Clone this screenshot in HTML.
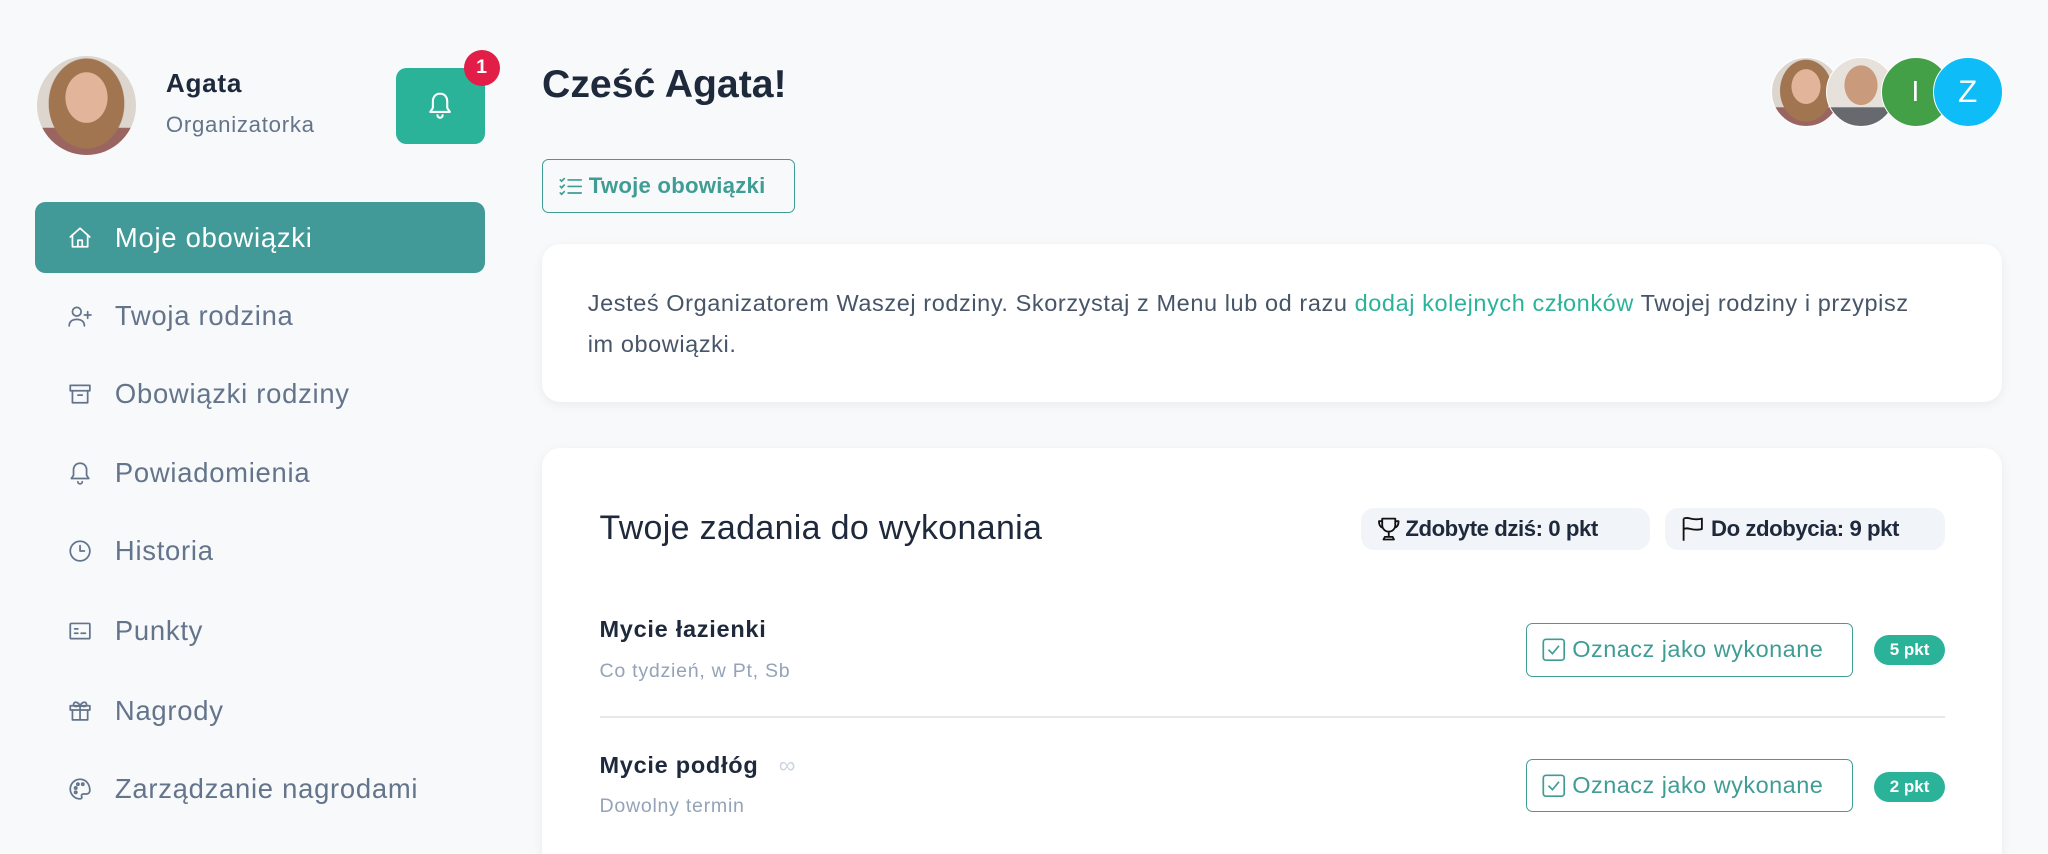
<!DOCTYPE html>
<html><head><meta charset="utf-8"><style>
html,body{margin:0;padding:0;background:#f7f9fb;overflow:hidden}
#w{zoom:1.306122;width:1568px;height:654px;position:relative;font-family:"Liberation Sans",sans-serif;color:#1e293b;letter-spacing:0.035em}
.a{position:absolute;white-space:nowrap}
.av{border-radius:50%;overflow:hidden}
.mi{position:absolute;left:27px;width:344px;height:54px;display:flex;align-items:center;font-size:21px;color:#64748b}
.mi svg{position:absolute;left:24px;width:20px;height:20px;fill:none;stroke:#64748b;stroke-width:1.6;stroke-linecap:round;stroke-linejoin:round}
.mi span{position:absolute;left:61px}
.card{position:absolute;left:415px;width:1118px;background:#fff;border-radius:14px;box-shadow:0 2px 8px rgba(15,23,42,.06)}
.pill{position:absolute;top:389px;height:32px;background:#f1f5f9;border-radius:10px;font-weight:bold;font-size:17px;display:flex;align-items:center;padding:0 12px;box-sizing:border-box;letter-spacing:-0.02em;white-space:nowrap}
.btn{position:absolute;left:1168px;width:251px;height:41px;border:1.5px solid #3f9d95;border-radius:5px;box-sizing:border-box;color:#3f9d95;font-size:18px;display:flex;align-items:center;padding-left:12px;white-space:nowrap;letter-spacing:0.02em}
.bdg{position:absolute;left:1435px;width:54px;height:23px;border-radius:12px;background:#2bb39a;color:#fff;font-weight:bold;font-size:13px;display:flex;align-items:center;justify-content:center;letter-spacing:0}
.tt{position:absolute;left:459px;font-size:18px;font-weight:bold;color:#1e293b}
.ts{position:absolute;left:459px;font-size:15px;color:#94a3b8}
</style></head><body><div id="w">
<div class="a av" style="left:28px;top:43px;width:76px;height:76px;background:radial-gradient(ellipse 30% 36% at 50% 42%,#e2b59b 0 70%,transparent 72%),radial-gradient(ellipse 42% 50% at 50% 48%,#a07550 0 90%,transparent 92%),linear-gradient(#dcd6cf 72%,#9a6460 73%)"></div>
<div class="a" style="left:127px;top:52px;font-size:20px;font-weight:bold">Agata</div>
<div class="a" style="left:127px;top:86px;font-size:17px;color:#64748b">Organizatorka</div>
<div class="a" style="left:303px;top:52px;width:68px;height:58px;background:#2bb39a;border-radius:8px"></div>
<svg class="a" style="left:327px;top:70px" width="20" height="22" viewBox="0 0 20 22" fill="none" stroke="#fff" stroke-width="1.6" stroke-linecap="round" stroke-linejoin="round"><path d="M10 2c-3.3 0-5.5 2.5-5.5 6v5L2.5 16h15l-2-3V8c0-3.5-2.2-6-5.5-6z"/><path d="M8 18.5a2 2 0 0 0 4 0"/></svg>
<div class="a" style="left:355px;top:38px;width:28px;height:28px;border-radius:50%;background:#e11d48;color:#fff;font-weight:bold;font-size:15px;display:flex;align-items:center;justify-content:center">1</div>

<div class="mi" style="top:155px;background:#419a97;border-radius:8px;color:#fff"><svg viewBox="0 0 24 24" style="stroke:#fff"><path d="M3 11l9-8 9 8M5 9v11h14V9M10 20v-6h4v6"/></svg><span>Moje obowiązki</span></div>
<div class="mi" style="top:215px"><svg viewBox="0 0 24 24"><circle cx="9" cy="8" r="4"/><path d="M2 21c0-4 3-6 7-6s7 2 7 6M19 8v6M16 11h6"/></svg><span>Twoja rodzina</span></div>
<div class="mi" style="top:275px"><svg viewBox="0 0 24 24"><rect x="3" y="4" width="18" height="5"/><path d="M5 9v11h14V9M10 13h4"/></svg><span>Obowiązki rodziny</span></div>
<div class="mi" style="top:335px"><svg viewBox="0 0 24 24"><path d="M12 3c-3.5 0-6 2.5-6 6v5l-2 3h16l-2-3V9c0-3.5-2.5-6-6-6zM10 20a2 2 0 0 0 4 0"/></svg><span>Powiadomienia</span></div>
<div class="mi" style="top:395px"><svg viewBox="0 0 24 24"><circle cx="12" cy="12" r="9"/><path d="M12 7v5h4"/></svg><span>Historia</span></div>
<div class="mi" style="top:456px"><svg viewBox="0 0 24 24"><rect x="3" y="5" width="18" height="14" rx="1"/><path d="M7 10h3M7 14h3M13 14h4"/></svg><span>Punkty</span></div>
<div class="mi" style="top:517px"><svg viewBox="0 0 24 24"><rect x="3" y="8" width="18" height="4"/><path d="M5 12v9h14v-9M12 8v13M12 8c-2-4-6-4-6-1s6 1 6 1c2-4 6-4 6-1s-6 1-6 1"/></svg><span>Nagrody</span></div>
<div class="mi" style="top:577px"><svg viewBox="0 0 24 24"><path d="M12 3a9 9 0 1 0 0 18c1.5 0 2-1 1.5-2s0-2.5 1.5-2.5H18a3 3 0 0 0 3-3C21 7 17 3 12 3z"/><circle cx="8" cy="11" r="1"/><circle cx="10" cy="7.5" r="1"/><circle cx="14.5" cy="7.5" r="1"/><circle cx="8" cy="15" r="1"/></svg><span>Zarządzanie nagrodami</span></div>

<div class="a" style="left:415px;top:48px;font-size:30px;font-weight:bold;letter-spacing:0">Cześć Agata!</div>
<div class="a av" style="left:1356px;top:44px;width:52px;height:52px;border:1.5px solid #fff;background:radial-gradient(ellipse 30% 36% at 50% 42%,#e2b59b 0 70%,transparent 72%),radial-gradient(ellipse 42% 50% at 50% 48%,#a07550 0 90%,transparent 92%),linear-gradient(#dcd6cf 72%,#9a6460 73%)"></div>
<div class="a av" style="left:1398px;top:44px;width:52px;height:52px;border:1.5px solid #fff;background:radial-gradient(ellipse 30% 36% at 50% 40%,#c99a7c 0 80%,transparent 82%),linear-gradient(#e6e1da 72%,#666a6e 73%)"></div>
<div class="a av" style="left:1440px;top:44px;width:52px;height:52px;border:1.5px solid #fff;background:#43a047;color:#fff;font-size:22px;display:flex;align-items:center;justify-content:center">I</div>
<div class="a av" style="left:1480px;top:44px;width:52px;height:52px;border:1.5px solid #fff;background:#0ebcf8;color:#fff;font-size:24px;display:flex;align-items:center;justify-content:center">Z</div>

<div class="a" style="left:415px;top:122px;width:194px;height:41px;border:1.5px solid #3f9d95;border-radius:5px;box-sizing:border-box;color:#3f9d95;font-weight:bold;font-size:17px;display:flex;align-items:center;padding-left:12px;letter-spacing:0.01em"><svg width="18" height="16" viewBox="0 0 18 16" fill="none" stroke="#3f9d95" stroke-width="1.3" stroke-linecap="round" style="margin-right:5px"><path d="M1 3l1 1 2-2M1 8l1 1 2-2M1 13l1 1 2-2M7 3h10M7 8h10M7 13h10"/></svg>Twoje obowiązki</div>

<div class="card" style="top:187px;height:121px"></div>
<div class="a" style="left:450px;top:217px;width:1035px;white-space:normal;font-size:18px;line-height:31px;color:#475569;letter-spacing:0.025em">Jesteś Organizatorem Waszej rodziny. Skorzystaj z Menu lub od razu <span style="color:#2bb39a">dodaj kolejnych członków</span> Twojej rodziny i przypisz im obowiązki.</div>

<div class="card" style="top:343px;height:330px"></div>
<div class="a" style="left:459px;top:390px;font-size:26px;color:#1e293b;letter-spacing:0.01em">Twoje zadania do wykonania</div>
<div class="pill" style="left:1042px;width:221px"><svg width="18" height="20" viewBox="0 0 18 20" fill="none" stroke="#111" stroke-width="1.4" stroke-linejoin="round" style="margin-right:4px"><path d="M4 2h10v5a5 5 0 0 1-10 0zM4 4H1.5c0 3 1 4.5 3 5M14 4h2.5c0 3-1 4.5-3 5M9 12v4M5 18h8l-1-2H6z"/></svg>Zdobyte dziś: 0 pkt</div>
<div class="pill" style="left:1275px;width:214px"><svg width="18" height="20" viewBox="0 0 18 20" fill="none" stroke="#111" stroke-width="1.4" stroke-linejoin="round" style="margin-right:5px"><path d="M2 19V2M2 2c4-2 6 2 14 0v8c-8 2-10-2-14 0"/></svg>Do zdobycia: 9 pkt</div>

<div class="tt" style="top:472px">Mycie łazienki</div>
<div class="ts" style="top:505px">Co tydzień, w Pt, Sb</div>
<div class="btn" style="top:477px"><svg width="18" height="18" viewBox="0 0 18 18" fill="none" stroke="#3f9d95" stroke-width="1.3" style="margin-right:5px"><rect x="1" y="1" width="16" height="16" rx="2"/><path d="M5 9l3 3 5-6"/></svg>Oznacz jako wykonane</div>
<div class="bdg" style="top:486px">5 pkt</div>
<div class="a" style="left:459px;top:548px;width:1030px;height:2px;background:#e5e7eb"></div>
<div class="tt" style="top:576px">Mycie podłóg <span style="color:#cbd5e1;font-weight:normal;margin-left:10px">∞</span></div>
<div class="ts" style="top:609px">Dowolny termin</div>
<div class="btn" style="top:581px"><svg width="18" height="18" viewBox="0 0 18 18" fill="none" stroke="#3f9d95" stroke-width="1.3" style="margin-right:5px"><rect x="1" y="1" width="16" height="16" rx="2"/><path d="M5 9l3 3 5-6"/></svg>Oznacz jako wykonane</div>
<div class="bdg" style="top:591px">2 pkt</div>
</div></body></html>
